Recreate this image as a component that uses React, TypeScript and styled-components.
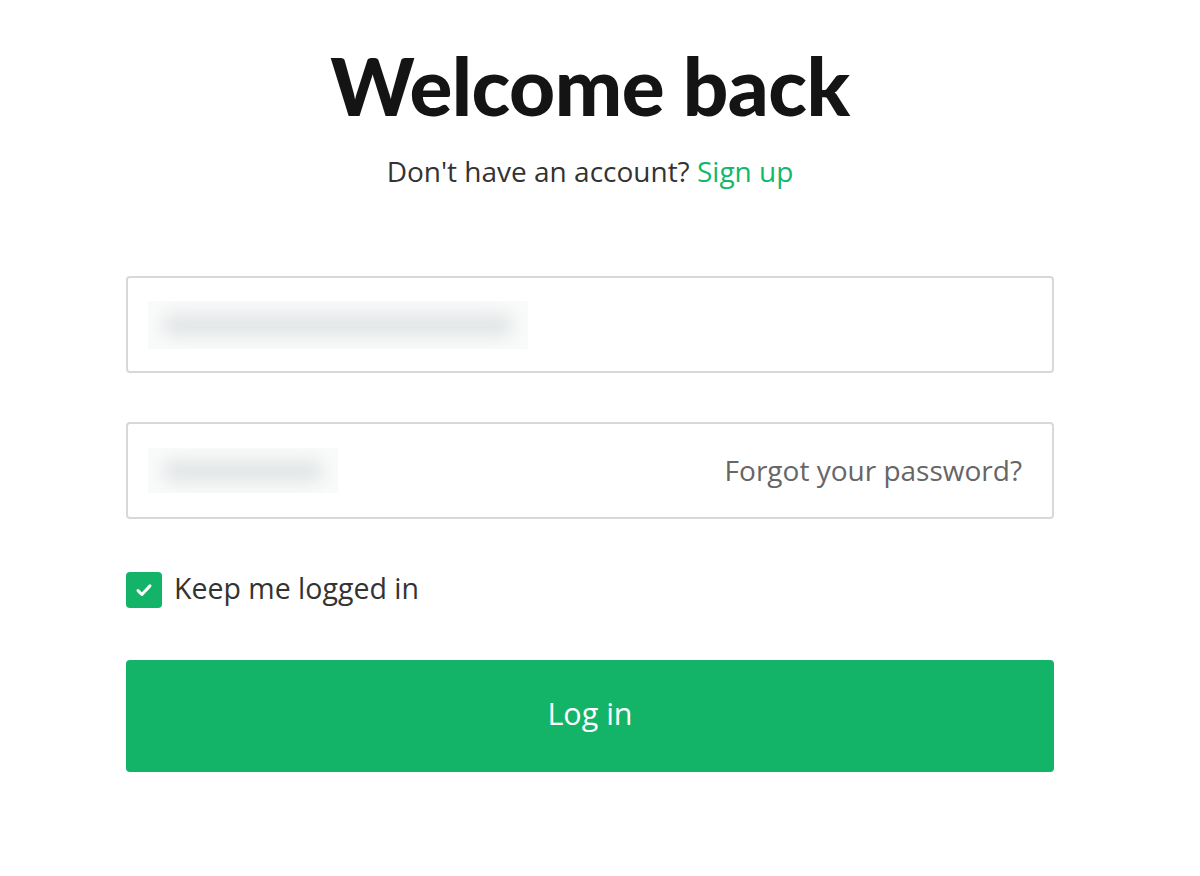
import React, { useState } from 'react'
import styled, { createGlobalStyle } from 'styled-components'

const GlobalStyle = createGlobalStyle`
  body {
    margin: 0;
    background: #ffffff;
    font-family: "Open Sans", "Noto Sans", "Liberation Sans", sans-serif;
  }
`

const App = () => {
    const [keep, setKeep] = useState(true)
    return (
        <>
            <GlobalStyle />
            <Page>
                <Title>Welcome back</Title>
                <Subtitle>
                    Don't have an account? <SignUp href="#">Sign up</SignUp>
                </Subtitle>
                <Form onSubmit={e => e.preventDefault()}>
                    <Field>
                        <Blurred width={380} height={48}>
                            <BlurBar width={350} />
                        </Blurred>
                    </Field>
                    <Field>
                        <Blurred width={190} height={45}>
                            <BlurBar width={160} />
                        </Blurred>
                        <Forgot href="#">Forgot your password?</Forgot>
                    </Field>
                    <KeepRow onClick={() => setKeep(!keep)}>
                        <Check checked={keep}>
                            {keep && (
                                <svg width="24" height="24" viewBox="0 0 24 24" fill="none">
                                    <path d="M6 12.6l3.9 3.9 8.1-8.6" stroke="#fff" strokeWidth="3" strokeLinecap="round" strokeLinejoin="round" />
                                </svg>
                            )}
                        </Check>
                        <KeepLabel>Keep me logged in</KeepLabel>
                    </KeepRow>
                    <Submit type="submit">Log in</Submit>
                </Form>
            </Page>
        </>
    )
}

const Page = styled.div`
  width: 928px;
  margin-left: 126px;
  padding-top: 40px;
  display: flex;
  flex-direction: column;
  align-items: center;
`
const Title = styled.h1`
  margin: 0;
  font-family: Lato, "Noto Sans", sans-serif;
  font-size: 80px;
  line-height: 90px;
  font-weight: 900;
  color: #141414;
  letter-spacing: -0.5px;
`
const Subtitle = styled.p`
  margin: 25px 0 0;
  font-size: 28px;
  line-height: 32px;
  color: #333333;
`
const SignUp = styled.a`
  color: #12b86a;
  text-decoration: none;
`
const Form = styled.form`
  width: 100%;
  margin-top: 89px;
  display: flex;
  flex-direction: column;
`
const Field = styled.div`
  height: 97px;
  box-sizing: border-box;
  border: 2px solid #d8d8d8;
  border-radius: 4px;
  margin-bottom: 49px;
  padding: 0 30px 0 20px;
  display: flex;
  align-items: center;
  justify-content: space-between;
  &:nth-child(2) {
    margin-bottom: 53px;
  }
`
const Blurred = styled.div<{ width: number; height: number }>`
  width: ${p => p.width}px;
  height: ${p => p.height}px;
  background: #f9fafa;
  overflow: hidden;
  display: flex;
  align-items: center;
  justify-content: center;
`
const BlurBar = styled.div<{ width: number }>`
  width: ${p => p.width}px;
  height: 22px;
  background: #e2e5e6;
  border-radius: 11px;
  filter: blur(8px);
`
const Forgot = styled.a`
  font-size: 28px;
  color: #666666;
  text-decoration: none;
  margin-top: -2px;
`
const KeepRow = styled.label`
  display: flex;
  align-items: center;
  gap: 12px;
  cursor: pointer;
  height: 36px;
`
const Check = styled.span<{ checked: boolean }>`
  width: 36px;
  height: 36px;
  box-sizing: border-box;
  border-radius: 4px;
  background: ${p => (p.checked ? '#13b467' : '#ffffff')};
  border: ${p => (p.checked ? 'none' : '2px solid #d8d8d8')};
  display: flex;
  align-items: center;
  justify-content: center;
`
const KeepLabel = styled.span`
  font-size: 28.5px;
  color: #333333;
  margin-top: -5px;
`
const Submit = styled.button`
  margin-top: 52px;
  height: 112px;
  padding-bottom: 7px;
  border: none;
  border-radius: 4px;
  background: #13b467;
  color: #ffffff;
  font-family: "Open Sans", "Noto Sans", sans-serif;
  font-size: 30.5px;
  font-weight: 500;
  cursor: pointer;
`

export default App
